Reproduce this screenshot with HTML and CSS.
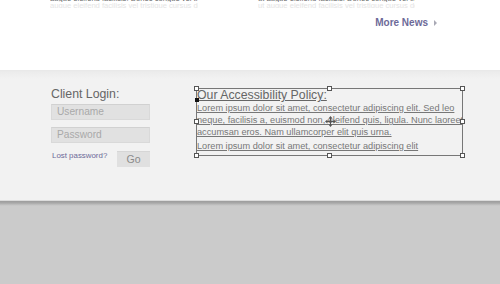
FILE: index.html
```html
<!DOCTYPE html>
<html>
<head>
<meta charset="utf-8">
<link rel="stylesheet" href="styles.css">
</head>
<body>
<div class="top">
  <div class="news-cols">
    <div class="col col-left"><div class="dark">augue eleifend facilisis. Donec congue vel tristique cursus.</div><div class="faint">augue eleifend facilisis vel tristique cursus donec congue vel</div></div>
    <div class="col col-right"><div class="dark">ut augue eleifend facilisis. Donec congue vel tristique cursus.</div><div class="faint">ut augue eleifend facilisis vel tristique cursus donec congue vel</div></div>
  </div>
  <div class="more"><a class="more-link" href="#">More News</a><span class="arrow"></span></div>
</div>
<div class="band">
  <div class="login">
    <h3 class="login-title">Client Login:</h3>
    <div class="field">Username</div>
    <div class="field field-pw">Password</div>
    <div class="login-row">
      <a class="lost" href="#">Lost password?</a>
      <span class="go">Go</span>
    </div>
  </div>
  <div class="policy">
    <h3 class="policy-title">Our Accessibility Policy:</h3>
    <p class="policy-text">Lorem ipsum dolor sit amet, consectetur adipiscing elit. Sed leo<br>neque, facilisis a, euismod non, eleifend quis, ligula. Nunc laoreet<br>accumsan eros. Nam ullamcorper elit quis urna.</p>
    <p class="policy-text policy-text2">Lorem ipsum dolor sit amet, consectetur adipiscing elit</p>
    <span class="caret"></span>
    <span class="h h-tl"></span><span class="h h-tm"></span><span class="h h-tr"></span>
    <span class="h h-ml"></span><span class="h h-mr"></span>
    <span class="h h-bl"></span><span class="h h-bm"></span><span class="h h-br"></span>
    <svg class="move" width="11" height="11" viewBox="0 0 11 11"><path d="M5.5 1v9M1 5.5h9" stroke="#555" stroke-width="1" fill="none"/><path d="M5.5 0L3.5 2.5h4zM5.5 11L3.5 8.5h4zM0 5.5L2.5 3.5v4zM11 5.5L8.5 3.5v4z" fill="#555"/></svg>
  </div>
</div>
<div class="footer"></div>
</body>
</html>
```
FILE: styles.css
```css
html, body { margin: 0; padding: 0; }
body { width: 500px; height: 284px; overflow: hidden; font-family: "Liberation Sans", Arial, sans-serif; background: #cbcbcb; }

.top { height: 70px; background: #fff; }
.news-cols { display: flex; gap: 60px; padding-left: 50px; height: 8px; overflow: hidden; }
.col { font-size: 7.6px; white-space: nowrap; overflow: hidden; margin-top: -5px; }
.dark { color: #6a6a6a; line-height: 8px; height: 7px; overflow: hidden; }
.faint { color: #e4e4e4; line-height: 7px; height: 6px; overflow: hidden; }
.col-left { width: 148px; }
.col-right { width: 157px; }

.more { display: flex; justify-content: flex-end; align-items: center; padding-right: 63px; margin-top: 9px; height: 12px; }
.more-link { font-size: 10px; font-weight: bold; color: #6d6a98; text-decoration: none; line-height: 12px; }
.arrow { width: 0; height: 0; border-left: 3px solid #a9a9b5; border-top: 3px solid transparent; border-bottom: 3px solid transparent; margin-left: 6px; }

.band { height: 130px; box-sizing: border-box; background: linear-gradient(#e8e8e8 0, #ececec 2px, #f2f2f2 9px); padding: 17px 0 0 51px; display: flex; gap: 46px; }

.login { width: 99px; }
.login-title { margin: 0; font-weight: normal; font-size: 12.3px; line-height: 14px; color: #666; }
.field { margin-top: 3px; height: 16px; box-sizing: border-box; background: #e1e1e1; border: 1px solid #d9d9d9; border-top-color: #d1d1d1; font-size: 10.2px; line-height: 14px; color: #a9a9a9; padding-left: 5px; }
.field-pw { margin-top: 7px; }
.login-row { display: flex; align-items: flex-start; margin-top: 8px; padding-left: 1px; }
.lost { font-size: 7.9px; line-height: 9px; color: #6d6a98; text-decoration: none; }
.go { margin-left: auto; width: 33px; height: 16px; box-sizing: border-box; background: #e0e0e0; border-top: 1px solid #d6d6d6; text-align: center; font-size: 10.5px; line-height: 15px; color: #8a8a8a; }

.policy { position: relative; margin-top: 1px; width: 267px; height: 68px; box-sizing: border-box; border: 1px solid #777; padding: 0; }
.policy-title { margin: 0; font-weight: normal; font-size: 12.3px; line-height: 13px; color: #666; text-decoration: underline; white-space: nowrap; }
.policy-text { margin: 0; font-size: 9.2px; line-height: 12px; color: #777; text-decoration: underline; white-space: nowrap; }
.policy-text2 { margin-top: 2px; }
.caret { position: absolute; left: -2px; top: 9px; width: 4px; height: 4px; background: #111; }
.h { position: absolute; width: 5px; height: 5px; box-sizing: border-box; background: #fff; border: 1px solid #555; }
.h-tl { left: -3px; top: -3px; }
.h-tm { left: 130px; top: -3px; }
.h-tr { right: -3px; top: -3px; }
.h-ml { left: -3px; top: 30px; }
.h-mr { right: -3px; top: 30px; }
.h-bl { left: -3px; bottom: -3px; }
.h-bm { left: 130px; bottom: -3px; }
.h-br { right: -3px; bottom: -3px; }
.move { position: absolute; left: 128px; top: 27px; }

.footer { height: 84px; background: linear-gradient(#dcdcdc 0, #dcdcdc 1px, #9c9c9c 1px, #a8a8a8 3px, #c2c2c2 5px, #cbcbcb 6px); }
```
